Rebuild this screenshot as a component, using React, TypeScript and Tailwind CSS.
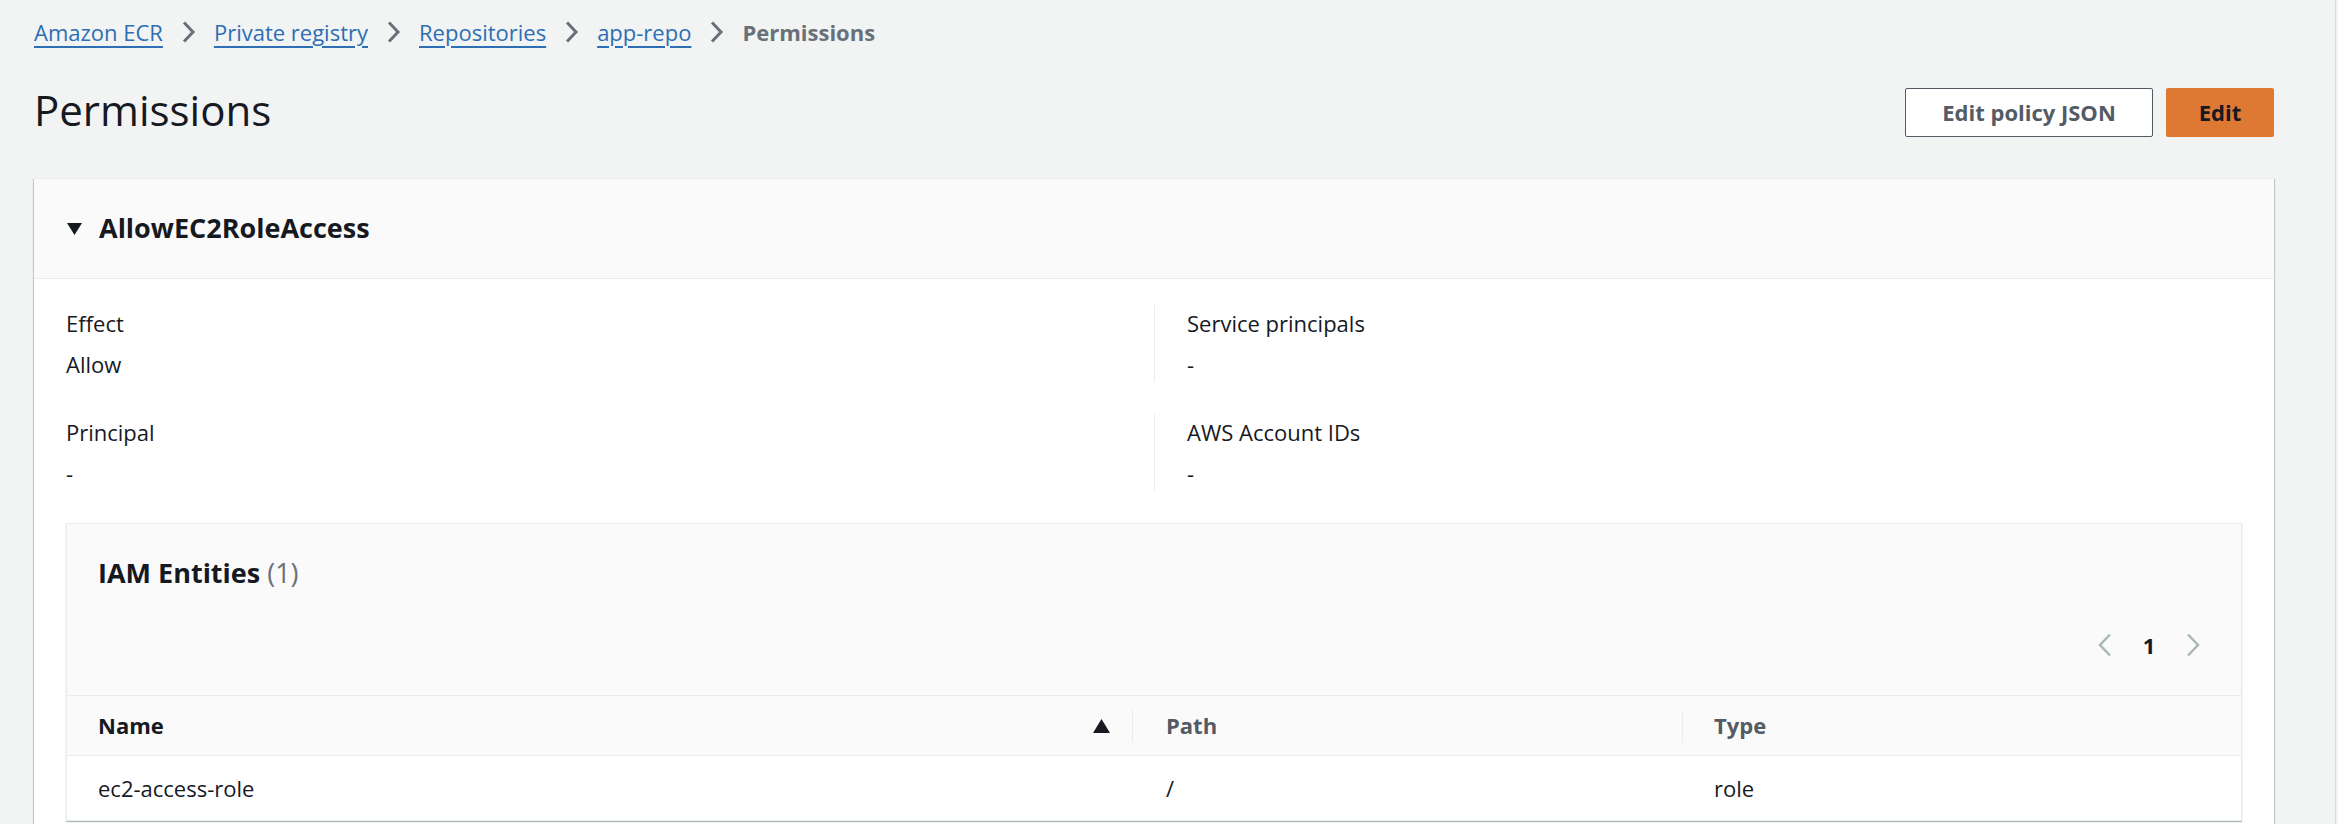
import React from 'react';

const crumbs = ['Amazon ECR', 'Private registry', 'Repositories', 'app-repo'];

function Chevron() {
  return (
    <svg width="15" height="24" viewBox="0 0 15 24" className="mx-[18px] shrink-0">
      <path d="M3 2.5 L12 12 L3 21.5" stroke="#687078" strokeWidth="3" fill="none" />
    </svg>
  );
}

function PageChevron({ dir }: { dir: 'left' | 'right' }) {
  return (
    <svg width="14" height="24" viewBox="0 0 14 24" className="shrink-0">
      <path
        d={dir === 'left' ? 'M12 1.5 L2 12 L12 22.5' : 'M2 1.5 L12 12 L2 22.5'}
        stroke="#aab7b8"
        strokeWidth="2.5"
        fill="none"
      />
    </svg>
  );
}

function KeyValue({ label, value, divider }: { label: string; value: string; divider?: boolean }) {
  return (
    <div className={divider ? 'border-l border-[#eaeded] pl-[32px]' : ''}>
      <div className="leading-[36px]">{label}</div>
      <div className="mt-[5px] leading-[36px]">{value}</div>
    </div>
  );
}

export default function App() {
  return (
    <div className="h-screen overflow-hidden bg-[#f2f3f3] flex text-[#16191f] text-[22px] font-['Open_Sans','Noto_Sans',sans-serif]">
      <div className="flex-1 min-w-0 pl-[34px] pr-[61px] pt-[14px]">
        {/* Breadcrumbs */}
        <nav className="flex items-center h-[36px]">
          {crumbs.map((c) => (
            <React.Fragment key={c}>
              <a className="text-[#2d6eb4] underline decoration-2 underline-offset-[5px] cursor-pointer whitespace-nowrap">
                {c}
              </a>
              <Chevron />
            </React.Fragment>
          ))}
          <span className="text-[#687078] font-bold whitespace-nowrap">Permissions</span>
        </nav>

        {/* Header */}
        <div className="flex items-start justify-between mt-[38px]">
          <h1 className="text-[42px] leading-[44px] font-normal">Permissions</h1>
          <div className="flex gap-[13px]">
            <button className="h-[49px] w-[248px] bg-white border border-[#545b64] rounded-[2px] text-[#545b64] font-bold">
              Edit policy JSON
            </button>
            <button className="h-[49px] w-[108px] bg-[#de7933] rounded-[2px] text-[#16191f] font-bold">
              Edit
            </button>
          </div>
        </div>

        {/* Statement card */}
        <div className="mt-[41px] bg-white border-t border-[#eaeded] shadow-[0_1px_1px_0_rgba(0,28,36,0.3),1px_1px_1px_0_rgba(0,28,36,0.15),-1px_1px_1px_0_rgba(0,28,36,0.15)]">
          <div className="h-[100px] bg-[#fafafa] border-b border-[#eaeded] flex items-center pl-[33px]">
            <svg width="15" height="12" viewBox="0 0 15 12">
              <path d="M0 0 H15 L7.5 12 Z" fill="#16191f" />
            </svg>
            <h2 className="ml-[17px] text-[27px] font-bold">AllowEC2RoleAccess</h2>
          </div>

          <div className="px-[32px] pt-[26px] pb-[32px]">
            <div className="flex flex-col gap-[32px]">
              <div className="grid grid-cols-2">
                <KeyValue label="Effect" value="Allow" />
                <KeyValue label="Service principals" value="-" divider />
              </div>
              <div className="grid grid-cols-2">
                <KeyValue label="Principal" value="-" />
                <KeyValue label="AWS Account IDs" value="-" divider />
              </div>
            </div>

            {/* IAM entities table */}
            <div className="mt-[32px] bg-white border border-[#eaeded] shadow-[0_1px_1px_0_rgba(0,28,36,0.3)]">
              <div className="bg-[#fafafa] pt-[31px] pl-[31px] pr-[41px] pb-[32px]">
                <h2 className="text-[27px] font-bold leading-[36px]">
                  IAM Entities <span className="font-normal text-[#687078]">(1)</span>
                </h2>
                <div className="mt-[36px] h-[36px] flex items-center justify-end gap-[25px]">
                  <PageChevron dir="left" />
                  <span className="w-[24px] text-center font-bold">1</span>
                  <PageChevron dir="right" />
                </div>
              </div>

              <div className="grid grid-cols-[1065px_550px_1fr] border-t border-[#eaeded]">
                <div className="h-[60px] bg-[#fafafa] border-b border-[#eaeded] flex items-center justify-between pl-[31px] pr-[22px]">
                  <span className="font-bold">Name</span>
                  <svg width="17" height="14" viewBox="0 0 17 14">
                    <path d="M8.5 0 L17 14 H0 Z" fill="#16191f" />
                  </svg>
                </div>
                <div className="h-[60px] bg-[#fafafa] border-b border-[#eaeded] flex items-center">
                  <div className="h-[32px] w-px bg-[#eaeded]" />
                  <span className="ml-[33px] font-bold text-[#545b64]">Path</span>
                </div>
                <div className="h-[60px] bg-[#fafafa] border-b border-[#eaeded] flex items-center">
                  <div className="h-[32px] w-px bg-[#eaeded]" />
                  <span className="ml-[31px] font-bold text-[#545b64]">Type</span>
                </div>

                <div className="h-[64px] flex items-center pl-[31px]">ec2-access-role</div>
                <div className="h-[64px] flex items-center pl-[34px]">/</div>
                <div className="h-[64px] flex items-center pl-[32px]">role</div>
              </div>
            </div>
          </div>
        </div>
      </div>
      <div className="w-[3px] border-l border-[#d5dbdb]" />
    </div>
  );
}
